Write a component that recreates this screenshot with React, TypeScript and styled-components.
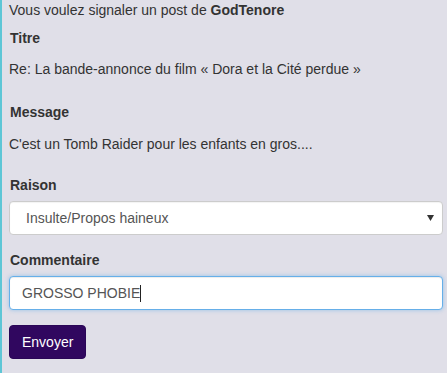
import React from "react";
import styled, { createGlobalStyle } from "styled-components";

const Global = createGlobalStyle`
  html, body { margin: 0; padding: 0; background: #e0dfe8; }
  body { font-family: "Liberation Sans", Arial, sans-serif; font-size: 14px; line-height: 20px; color: #333; }
`;

const Panel = styled.div`
  min-height: 373px;
  box-sizing: border-box;
  border-left: 2px solid #5ec6d6;
  padding: 0 4px 0 7px;
  display: flex;
  flex-direction: column;
`;

const Intro = styled.p`
  margin: 0 0 8px 0;
  b { font-weight: bold; }
`;

const Label = styled.div<{ $mb?: number }>`
  font-weight: bold;
  margin: 0 0 ${(p) => p.$mb ?? 6}px 1px;
`;

const Text = styled.p<{ $mb?: number }>`
  margin: 0 0 ${(p) => p.$mb ?? 22}px 0;
`;

const Field = styled.div`
  margin-bottom: 15px;
  display: flex;
  flex-direction: column;
`;

const SelectBox = styled.div`
  position: relative;
  height: 32px;
  border: 1px solid #ccc;
  border-radius: 4px;
  background: #fff;
  display: flex;
  align-items: center;
  padding-left: 16px;
  color: #555;
  box-shadow: inset 0 1px 1px rgba(0, 0, 0, 0.05);
`;

const Arrow = styled.svg`
  position: absolute;
  right: 8px;
  top: 13px;
`;

const Input = styled.div`
  height: 32px;
  border: 1px solid #66afe9;
  border-radius: 4px;
  background: #fff;
  display: flex;
  align-items: center;
  padding-left: 12px;
  color: #555;
  box-shadow: inset 0 1px 1px rgba(0, 0, 0, 0.075), 0 0 4px rgba(102, 175, 233, 0.6);
`;

const Caret = styled.span`
  display: inline-block;
  width: 1px;
  height: 17px;
  background: #222;
`;

const Button = styled.button`
  align-self: flex-start;
  margin: 0;
  height: 34px;
  padding: 0 12px;
  border: 1px solid #2a0657;
  border-radius: 4px;
  background: #30075f;
  color: #fff;
  font-family: "Liberation Sans", Arial, sans-serif;
  font-size: 14px;
  line-height: 20px;
`;

export default function App() {
  return (
    <>
      <Global />
      <Panel>
        <Intro>
          Vous voulez signaler un post de <b>GodTenore</b>
        </Intro>
        <Label $mb={11}>Titre</Label>
        <Text $mb={23}>Re: La bande-annonce du film « Dora et la Cité perdue »</Text>
        <Label $mb={12}>Message</Label>
        <Text $mb={21}>C'est un Tomb Raider pour les enfants en gros....</Text>
        <Field>
          <Label>Raison</Label>
          <SelectBox>
            Insulte/Propos haineux
            <Arrow width="7" height="6" viewBox="0 0 7 6">
              <path d="M0 0 H7 L3.5 6 Z" fill="#333" />
            </Arrow>
          </SelectBox>
        </Field>
        <Field>
          <Label $mb={6}>Commentaire</Label>
          <Input>
            GROSSO PHOBIE
            <Caret />
          </Input>
        </Field>
        <Button>Envoyer</Button>
      </Panel>
    </>
  );
}
